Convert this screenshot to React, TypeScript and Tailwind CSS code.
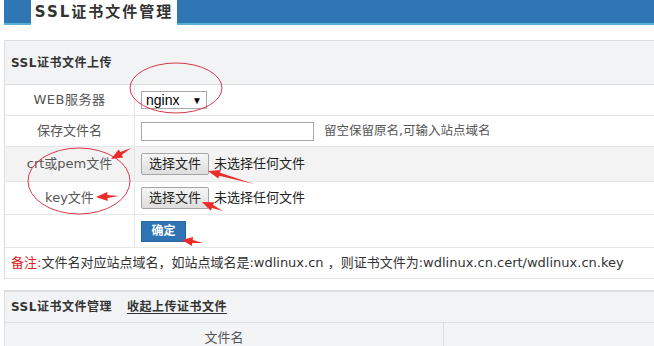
import React from "react";

const font = { fontFamily: '"DejaVu Sans", "Noto Sans CJK SC", sans-serif' };

function Arrow({ x1, y1, x2, y2 }: { x1: number; y1: number; x2: number; y2: number }) {
  const dx = x2 - x1;
  const dy = y2 - y1;
  const len = Math.hypot(dx, dy);
  const ux = dx / len;
  const uy = dy / len;
  const px = -uy;
  const py = ux;
  const headLen = Math.min(12, len * 0.5);
  const bx = x2 - ux * headLen;
  const by = y2 - uy * headLen;
  const pts = [
    [x1, y1],
    [bx + px * 1.6, by + py * 1.6],
    [bx + px * 4.5, by + py * 4.5],
    [x2, y2],
    [bx - px * 4.5, by - py * 4.5],
    [bx - px * 1.6, by - py * 1.6],
  ]
    .map((p) => p.join(","))
    .join(" ");
  return <polygon points={pts} fill="#ee2b2b" />;
}

export default function App() {
  return (
    <div className="relative w-[654px] h-[346px] overflow-hidden bg-white text-[#555]" style={font}>
      {/* top bar */}
      <div className="pl-[4px]">
        <div className="flex h-[25px] bg-[#2f76b4] border-b-2 border-[#5bb0d8]">
          <div className="ml-[27px] w-[146px] bg-white flex items-center justify-center font-bold text-[15px] text-[#333] tracking-[2px] h-[25px]">
            SSL证书文件管理
          </div>
        </div>
      </div>

      {/* upload panel */}
      <div className="ml-[4px] mt-[15px] border-l border-t border-[#dcdcdc]">
        <div className="h-[44px] bg-[#f2f3f5] flex items-center pl-[6px] font-bold text-[12px] text-[#333] tracking-[0.5px] border-b border-[#dedede]">
          SSL证书文件上传
        </div>

        <div className="flex h-[31px] border-b border-[#e6e6e6]">
          <div className="w-[130px] border-r border-[#e6e6e6] flex items-center justify-center text-[13px] tracking-[0.5px]">WEB服务器</div>
          <div className="flex items-center pl-[6px]">
            <div className="w-[66px] h-[18px] border border-[#a9a9a9] flex items-center justify-between px-[4px] text-[14px] text-black" style={{ fontFamily: '"Liberation Sans", sans-serif' }}>
              <span>nginx</span>
              <span className="text-[10px]">▼</span>
            </div>
          </div>
        </div>

        <div className="flex h-[31px] border-b border-[#e6e6e6]">
          <div className="w-[130px] border-r border-[#e6e6e6] flex items-center justify-center text-[13px]">保存文件名</div>
          <div className="flex items-center pl-[6px]">
            <div className="w-[173px] h-[19px] border border-[#a9a9a9] bg-white" />
            <span className="ml-[10px] text-[12.5px]">留空保留原名,可输入站点域名</span>
          </div>
        </div>

        <div className="flex h-[35px] border-b border-[#e6e6e6] bg-[#f3f3f3]">
          <div className="w-[130px] border-r border-[#e6e6e6] flex items-center justify-center text-[13px]">crt或pem文件</div>
          <div className="flex items-center pl-[6px]">
            <div className="w-[68px] h-[22px] border border-[#a6a6a6] rounded-[2px] bg-gradient-to-b from-[#f6f6f6] to-[#dedede] flex items-center justify-center text-[13px] text-[#222]">选择文件</div>
            <span className="ml-[5px] text-[13px] text-[#222]">未选择任何文件</span>
          </div>
        </div>

        <div className="flex h-[33px] border-b border-[#e6e6e6]">
          <div className="w-[130px] border-r border-[#e6e6e6] flex items-center justify-center text-[13px]">key文件</div>
          <div className="flex items-center pl-[6px]">
            <div className="w-[68px] h-[22px] border border-[#a6a6a6] rounded-[2px] bg-gradient-to-b from-[#f6f6f6] to-[#dedede] flex items-center justify-center text-[13px] text-[#222]">选择文件</div>
            <span className="ml-[5px] text-[13px] text-[#222]">未选择任何文件</span>
          </div>
        </div>

        <div className="flex h-[33px] border-b border-[#e6e6e6]">
          <div className="w-[130px] border-r border-[#e6e6e6]" />
          <div className="flex items-center pl-[6px]">
            <div className="w-[45px] h-[21px] bg-[#2e73b3] border border-[#2a66a0] flex items-center justify-center text-[12px] font-bold text-white">确定</div>
          </div>
        </div>

        <div className="h-[31px] border-b border-[#e6e6e6] flex items-center pl-[6px] text-[13px] text-[#333] whitespace-nowrap">
          <span className="text-[#e0201b]">备注:</span>文件名对应站点域名，如站点域名是:wdlinux.cn ，则证书文件为:wdlinux.cn.cert/wdlinux.cn.key
        </div>
      </div>

      {/* manage panel */}
      <div className="ml-[4px] mt-[11px] border-l border-t-2 border-[#dcdcdc]">
        <div className="h-[31px] bg-[#f2f3f5] flex items-center pl-[6px] font-bold text-[12px] text-[#333] tracking-[0.5px] border-b border-[#dedede]">
          <span>SSL证书文件管理</span>
          <span className="ml-[15px] underline underline-offset-2">收起上传证书文件</span>
        </div>
        <div className="flex h-[30px] bg-[#f3f4f6]">
          <div className="w-[439px] border-r border-[#dedede] flex items-center justify-center text-[13px]">文件名</div>
          <div className="flex-1" />
        </div>
      </div>

      {/* annotations */}
      <svg className="absolute left-0 top-0 pointer-events-none" width="654" height="346" viewBox="0 0 654 346">
        <ellipse cx="176" cy="88" rx="46" ry="25" fill="none" stroke="#d9384b" strokeWidth="1" />
        <ellipse cx="79" cy="181" rx="51" ry="33" fill="none" stroke="#d9384b" strokeWidth="1" />
        <Arrow x1={131} y1={148} x2={111} y2={159} />
        <Arrow x1={119} y1={196} x2={96} y2={197} />
        <Arrow x1={254} y1={184} x2={208} y2={171} />
        <Arrow x1={223} y1={211} x2={202} y2={202} />
        <Arrow x1={203} y1={243} x2={182} y2={240} />
      </svg>
    </div>
  );
}
